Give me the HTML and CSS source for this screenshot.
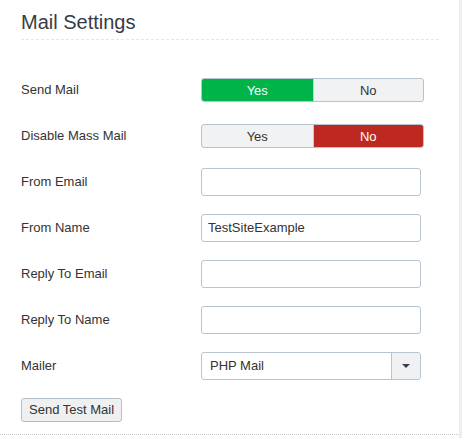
FILE: index.html
```html
<!DOCTYPE html>
<html>
<head>
<meta charset="utf-8">
<link rel="stylesheet" href="styles.css">
</head>
<body>
<div class="page">
  <div class="panel">
    <div class="header">
      <h2 class="title">Mail Settings</h2>
    </div>
    <div class="form">
      <div class="row">
        <label class="label">Send Mail</label>
        <div class="toggle">
          <span class="opt opt-yes-on">Yes</span>
          <span class="opt">No</span>
        </div>
      </div>
      <div class="row">
        <label class="label">Disable Mass Mail</label>
        <div class="toggle">
          <span class="opt">Yes</span>
          <span class="opt opt-no-on">No</span>
        </div>
      </div>
      <div class="row">
        <label class="label">From Email</label>
        <div class="input"></div>
      </div>
      <div class="row">
        <label class="label">From Name</label>
        <div class="input">TestSiteExample</div>
      </div>
      <div class="row">
        <label class="label">Reply To Email</label>
        <div class="input"></div>
      </div>
      <div class="row">
        <label class="label">Reply To Name</label>
        <div class="input"></div>
      </div>
      <div class="row">
        <label class="label">Mailer</label>
        <div class="select">
          <span class="select-value">PHP Mail</span>
          <span class="select-btn"><span class="caret"></span></span>
        </div>
      </div>
    </div>
    <div class="actions">
      <button class="btn">Send Test Mail</button>
    </div>
  </div>
</div>
</body>
</html>
```

FILE: styles.css
```css
html, body {
  margin: 0;
  padding: 0;
  background: #ffffff;
}
body {
  font-family: "Liberation Sans", Arial, sans-serif;
  color: #333333;
  font-size: 13px;
}
.page {
  width: 459px;
  height: 438px;
  border-right: 3px solid #eeeeee;
}
.panel {
  height: 435px;
  box-sizing: border-box;
  border-bottom: 1px dotted #c8c8c8;
  padding: 0 20px 0 21px;
}
.header {
  padding-top: 10px;
  padding-bottom: 5px;
  border-bottom: 1px dashed #e6e6e6;
  width: 418px;
}
.title {
  margin: 0;
  font-size: 20px;
  line-height: 24px;
  font-weight: normal;
  color: #383b47;
}
.form {
  padding-top: 27px;
  display: flex;
  flex-direction: column;
}
.row {
  height: 46px;
  display: flex;
  align-items: center;
}
.label {
  width: 180px;
  flex: none;
  color: #333333;
  line-height: 16px;
}
.toggle {
  width: 223px;
  height: 24px;
  display: grid;
  grid-template-columns: 1fr 1fr;
  box-sizing: border-box;
  border: 1px solid #b9c3cd;
  border-radius: 3px;
  overflow: hidden;
  background: #f1f2f3;
}
.opt {
  display: flex;
  align-items: center;
  justify-content: center;
  color: #333333;
}
.opt + .opt {
  border-left: 1px solid #c5ccd3;
}
.opt-yes-on {
  background: #00b44a;
  color: #ffffff;
}
.opt-no-on {
  background: #bd2920;
  color: #ffffff;
}
.input {
  width: 220px;
  height: 28px;
  box-sizing: border-box;
  border: 1px solid #b8c4cf;
  border-radius: 3px;
  padding: 0 6px;
  line-height: 26px;
  color: #333333;
  background: #ffffff;
}
.select {
  width: 220px;
  height: 28px;
  box-sizing: border-box;
  border: 1px solid #b8c4cf;
  border-radius: 3px;
  display: flex;
  overflow: hidden;
}
.select-value {
  flex: 1;
  padding: 0 8px;
  line-height: 26px;
}
.select-btn {
  width: 28px;
  border-left: 1px solid #b8c4cf;
  background: #f0f1f2;
  display: flex;
  align-items: center;
  justify-content: center;
}
.caret {
  width: 0;
  height: 0;
  border-left: 4px solid transparent;
  border-right: 4px solid transparent;
  border-top: 4px solid #3a3d4a;
}
.actions {
  padding-top: 9px;
}
.btn {
  font-family: "Liberation Sans", Arial, sans-serif;
  font-size: 13px;
  color: #333333;
  height: 24px;
  padding: 0 7px;
  background: #eef0f2;
  border: 1px solid #b4bec8;
  border-radius: 3px;
  line-height: 22px;
}
```
